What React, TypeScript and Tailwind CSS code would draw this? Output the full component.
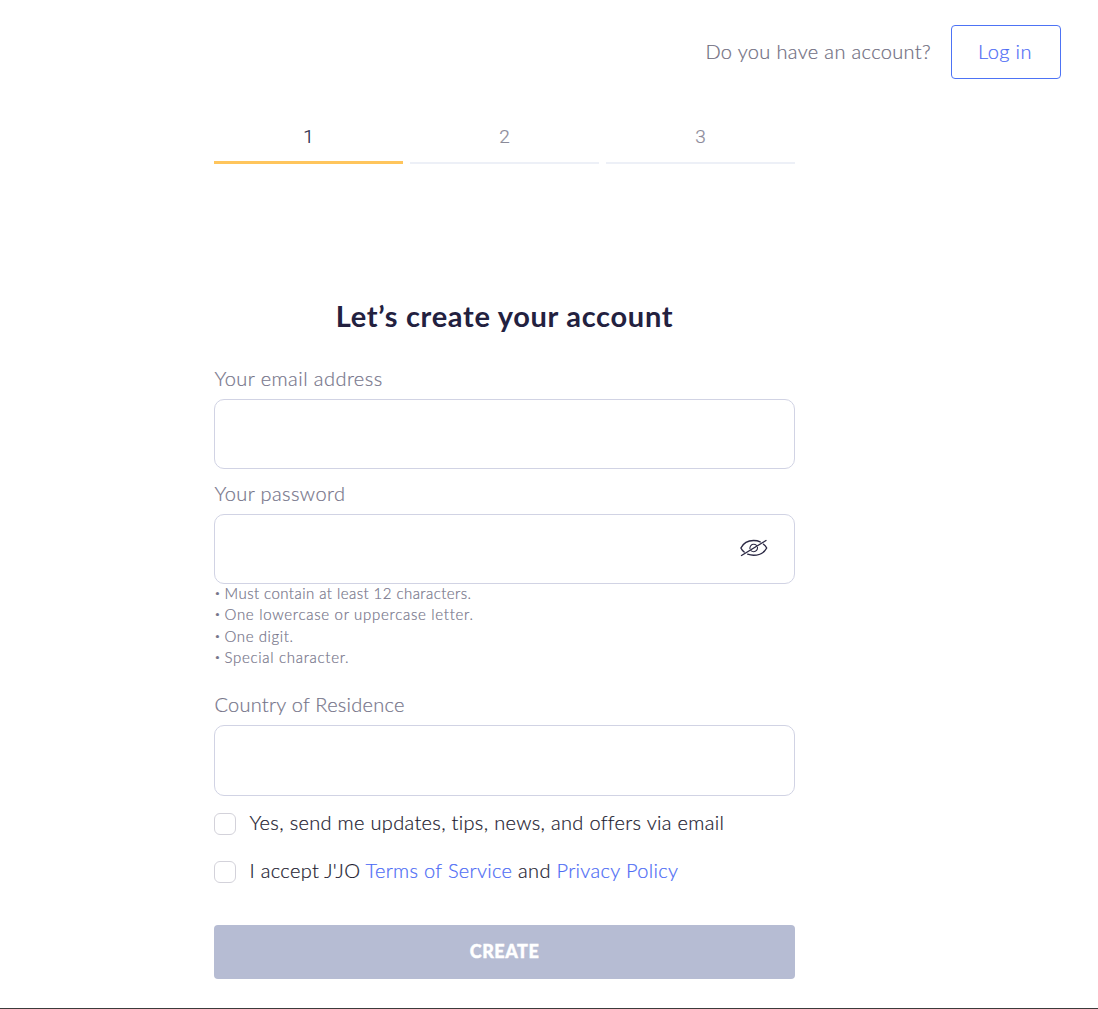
import { useState } from "react";

const STEPS = [1, 2, 3] as const;

const PASSWORD_RULES: readonly { text: string; tracking: string }[] = [
  { text: "Must contain at least 12 characters.", tracking: "tracking-[0.45px]" },
  { text: "One lowercase or uppercase letter.", tracking: "tracking-[0.71px]" },
  { text: "One digit.", tracking: "tracking-[0.6px]" },
  { text: "Special character.", tracking: "tracking-[0.7px]" },
];

function EyeOffIcon() {
  return (
    <svg
      width="28"
      height="18"
      viewBox="0 0 28 18"
      fill="none"
      stroke="#2b2944"
      strokeWidth="1.4"
      strokeLinecap="round"
      strokeLinejoin="round"
    >
      <path d="M4.2 13C2.800 11.900 1.600 10.500 0.900 9C3.300 4.200 8 1.500 13.600 1.500C16.200 1.500 18.400 2 20.200 2.900" />
      <path d="M7.700 15.200C9.500 15.900 11.500 16.300 13.600 16.300C19.400 16.300 24.300 13.600 26.700 9C25.900 7.500 24.800 6.200 23.500 5.200" />
      <path d="M9.900 9.700C9.600 7.200 11.400 5.300 13.700 5.300C14.900 5.300 15.800 5.700 16.500 6.300" strokeWidth="1.1" />
      <path d="M17.500 8.300C17.800 10.800 16 12.700 13.700 12.700C12.500 12.700 11.600 12.300 10.900 11.700" strokeWidth="1.1" />
      <path d="M1.500 16.500L26 1.500" />
    </svg>
  );
}

export default function App() {
  const [showPassword, setShowPassword] = useState(false);

  return (
    <div className="flex h-[1009px] w-[1098px] flex-col border-b border-[#3c3c3c] bg-white font-['Lato',sans-serif] font-light text-[#23213f] [-webkit-text-stroke:0.2px]">
      <header className="flex items-center justify-end gap-5 pt-[25px] pr-[37px]">
        <span className="-mt-[3px] text-[20px] tracking-[0.35px] text-[#6f6d80]">
          Do you have an account?
        </span>
        <button className="h-[54px] w-[110px] rounded-[4px] border border-[#4d73f5] pr-[2px] pb-[3px] text-[20px] tracking-[0.4px] text-[#4d6bf5]">
          Log in
        </button>
      </header>

      <main className="ml-[214px] flex w-[581px] flex-col">
        <ol className="mt-[43px] grid grid-cols-3 gap-[7px] font-['Roboto',sans-serif]">
          {STEPS.map((step) => (
            <li
              key={step}
              className={
                step === 1
                  ? "h-[42px] border-b-3 border-[#ffc55c] text-center text-[19px] leading-[30px]"
                  : "h-[42px] border-b-2 border-[#edf0f7] text-center text-[19px] leading-[30px] text-[#8b8a99]"
              }
            >
              {step}
            </li>
          ))}
        </ol>

        <h1 className="mt-[132px] text-center text-[29px] leading-[40px] font-bold tracking-[0.7px] [-webkit-text-stroke:0px]">
          Let’s create your account
        </h1>

        <form className="mt-[27px] flex flex-col" onSubmit={(e) => e.preventDefault()}>
          <label htmlFor="email" className="h-[36px] pl-[0.5px] text-[20px] leading-[30px] tracking-[0.44px] text-[#76758a]">
            Your email address
          </label>
          <input
            id="email"
            type="email"
            className="h-[70px] rounded-[10px] border border-[#d1d3e4] px-6 outline-none"
          />

          <label htmlFor="password" className="mt-[9px] h-[36px] pl-[0.5px] text-[20px] leading-[30px] tracking-[0.4px] text-[#76758a]">
            Your password
          </label>
          <div className="flex h-[70px] items-center rounded-[10px] border border-[#d1d3e4] pr-[26px] pb-[2px] pl-6">
            <input
              id="password"
              type={showPassword ? "text" : "password"}
              className="min-w-0 flex-1 outline-none"
            />
            <button type="button" onClick={() => setShowPassword(!showPassword)}>
              <EyeOffIcon />
            </button>
          </div>
          <ul className="-mt-px text-[15px] leading-[21.4px] text-[#76758a]">
            {PASSWORD_RULES.map((rule) => (
              <li key={rule.text} className="flex">
                <span className="w-[10.5px] pl-[0.5px] text-[10px]">•</span>
                <span className={rule.tracking}>{rule.text}</span>
              </li>
            ))}
          </ul>

          <label htmlFor="country" className="mt-[20px] h-[36px] pl-[0.5px] text-[20px] leading-[30px] tracking-[0.25px] text-[#76758a]">
            Country of Residence
          </label>
          <input
            id="country"
            className="h-[71px] rounded-[10px] border border-[#d1d3e4] px-6 outline-none"
          />

          <label className="mt-[13px] flex h-[30px] items-center text-[20px] text-[#1d1b30]">
            <input
              type="checkbox"
              className="mr-[13.5px] size-[22px] appearance-none rounded-[6px] border border-[#d3d2da]"
            />
            <span className="pb-[3px] tracking-[0.32px]">
              Yes, send me updates, tips, news, and offers via email
            </span>
          </label>
          <label className="mt-[18px] flex h-[30px] items-center text-[20px] text-[#1d1b30]">
            <input
              type="checkbox"
              className="mr-[13.5px] size-[22px] appearance-none rounded-[6px] border border-[#d3d2da]"
            />
            <span className="pb-[3px] tracking-[0.32px]">
              I accept J'JO <a className="text-[#4d6bf5]">Terms of Service</a> and{" "}
              <a className="text-[#4d6bf5]">Privacy Policy</a>
            </span>
          </label>

          <button className="mt-[38px] h-[54px] rounded-[4px] bg-[#b6bcd3] text-[18px] font-black tracking-[0.5px] text-white [-webkit-text-stroke:0.4px]">
            CREATE
          </button>
        </form>
      </main>
    </div>
  );
}
